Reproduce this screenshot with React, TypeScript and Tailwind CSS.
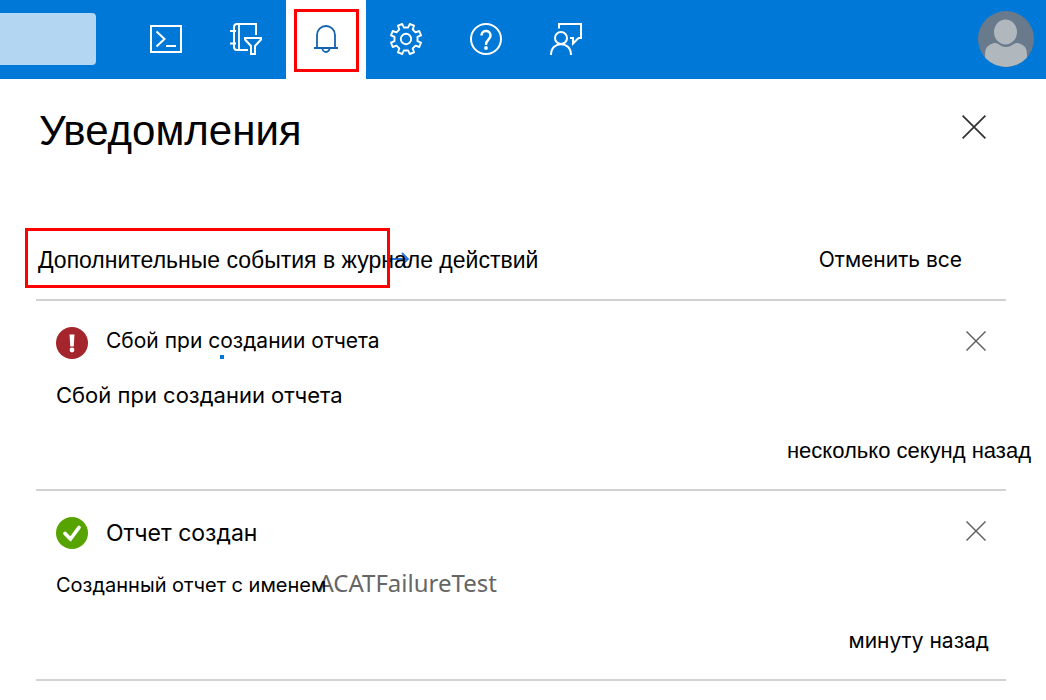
import type { ReactNode } from "react";

function HeaderButton({ label, children }: { label: string; children: ReactNode }) {
  return (
    <button type="button" aria-label={label} className="flex h-full w-20 items-center justify-center text-white">
      {children}
    </button>
  );
}

function CloseIcon({ className }: { className: string }) {
  return (
    <svg viewBox="0 0 24 24" className={className} fill="none" stroke="currentColor" strokeWidth="1.7" aria-hidden="true">
      <path d="M.6.6 23.4 23.4M23.4.6.6 23.4" />
    </svg>
  );
}

function Header() {
  return (
    <header className="flex h-[79px] items-center bg-[#0078d7]">
      <div className="mr-[30px] pb-px">
        <input
          type="search"
          aria-label="Поиск"
          className="block h-[52px] w-24 rounded-r-sm bg-[#b3d7f3] outline-none"
        />
      </div>
      <nav aria-label="Панель инструментов" className="flex h-full [&>button]:pb-px">
        <HeaderButton label="Cloud Shell">
          <svg viewBox="0 0 32 28" className="h-7 w-8" fill="none" stroke="currentColor" strokeWidth="2">
            <path d="M1 1h30v26H1zM6.500 6.500l8 7.500-8 7.500M16 21h10" />
          </svg>
        </HeaderButton>
        <HeaderButton label="Каталоги и подписки">
          <svg viewBox="0 0 32 32" className="size-8" fill="none" stroke="currentColor" strokeWidth="2">
            <path d="M26 12V1H7Q4 1 4 4v20q0 3 3 3h11" />
            <path d="M9 1v26M0 8h6M0 20.500h6" strokeWidth="1.800" />
            <path d="M15 15h16v1.500l-6 6.500v8h-4v-8l-6-6.500z" />
          </svg>
        </HeaderButton>
        <button type="button" aria-label="Уведомления" className="flex h-full w-20 items-center justify-center bg-white pt-[3px] text-[#1264b0]">
          <span className="flex h-[63px] w-[65px] items-center justify-center border-3 border-[#ff0000]">
            <svg viewBox="0 0 24 28" className="mb-1 h-7 w-6" fill="none" stroke="currentColor" strokeWidth="1.800">
              <path d="M3 22.500V10a9 9 0 0 1 18 0v12.500M0 23h24M8.500 23.500a3.500 3.500 0 0 0 7 0" />
            </svg>
          </span>
        </button>
        <HeaderButton label="Параметры">
          <svg viewBox="0 0 32 32" className="size-8" fill="none" stroke="currentColor" strokeWidth="1.900" strokeLinejoin="round">
            <circle cx="16" cy="16" r="5.200" />
            <path d="M13.800 4.500 12.300 1 8 2.700 9.300 6.500 6.500 9.300 2.700 8 1 12.300 4.500 13.800V18.200L1 19.700 2.700 24 6.500 22.700 9.300 25.500 8 29.300 12.300 31 13.800 27.500H18.200L19.700 31 24 29.300 22.700 25.500 25.500 22.700 29.300 24 31 19.700 27.500 18.200V13.800L31 12.300 29.300 8 25.500 9.300 22.700 6.500 24 2.700 19.700 1 18.200 4.500Z" />
          </svg>
        </HeaderButton>
        <HeaderButton label="Справка">
          <svg viewBox="0 0 32 32" className="size-8" fill="none" stroke="currentColor" strokeWidth="2">
            <circle cx="16" cy="16" r="15" />
            <path d="M11.500 12.500C11.500 6.500 20.500 6.500 20.500 12.500 20.500 16.500 16 16.500 16 22" strokeWidth="2.500" />
            <circle cx="16" cy="25" r="1.900" fill="currentColor" stroke="none" />
          </svg>
        </HeaderButton>
        <HeaderButton label="Отзывы">
          <svg viewBox="0 0 32 32" className="size-8" fill="none" stroke="currentColor" strokeWidth="2">
            <circle cx="11" cy="15" r="6" />
            <path d="M1 32c0-14.500 20-14.500 20 0M9 5.500V1h22v14h-2.500L23 20.500V15h-3" />
          </svg>
        </HeaderButton>
      </nav>
      <div className="mr-3 ml-auto pb-px">
        <button type="button" aria-label="Учетная запись" className="block size-14 overflow-hidden rounded-full bg-[#697a8c]">
          <svg viewBox="0 0 56 56" className="size-full" aria-hidden="true">
            <path d="M7 56V43q0-9 9-11 3-.5 5 1.500 7 5 14 0 2-2 5-1.500 9 2 9 11v13Z" fill="#b1b8bd" />
            <ellipse cx="27.500" cy="21" rx="11.500" ry="12.500" fill="#b1b8bd" />
          </svg>
        </button>
      </div>
    </header>
  );
}

function ErrorIcon() {
  return (
    <svg viewBox="0 0 32 32" className="size-8 shrink-0" role="img" aria-label="Ошибка">
      <circle cx="16" cy="16" r="16" fill="#a4262c" />
      <path d="M13.500 7.500h5l-.8 12h-3.400z" fill="#fff" />
      <circle cx="16" cy="23" r="2.400" fill="#fff" />
    </svg>
  );
}

function SuccessIcon() {
  return (
    <svg viewBox="0 0 32 32" className="size-8 shrink-0" role="img" aria-label="Успешно">
      <circle cx="16" cy="16" r="16" fill="#57a300" />
      <path d="m9 16.500 5.500 5.500L23 10.500" fill="none" stroke="#fff" strokeWidth="3.700" strokeLinecap="round" />
    </svg>
  );
}

interface NotificationProps {
  icon: ReactNode;
  title: ReactNode;
  titleClass: string;
  time: string;
  timeClass: string;
  children: ReactNode;
}

function Notification({ icon, title, titleClass, time, timeClass, children }: NotificationProps) {
  return (
    <li className="border-b-2 border-[#d2d2d2] pt-[26px] pb-[25px] pl-5">
      <div className="flex items-start">
        {icon}
        <h2 className={`ml-[18px] ${titleClass}`}>{title}</h2>
        <button type="button" aria-label="Закрыть уведомление" className="mt-1 mr-5 ml-auto text-[#605e5c]">
          <CloseIcon className="size-5" />
        </button>
      </div>
      <p className="mt-[22px] flex h-7 items-baseline leading-7 whitespace-nowrap">{children}</p>
      <p className={`mt-7 -mb-px text-right leading-7 ${timeClass}`}>{time}</p>
    </li>
  );
}

export default function App() {
  return (
    <div className="bg-white font-['Inter','Liberation_Sans',sans-serif] text-black">
      <Header />
      <main className="pt-7 pr-10 pl-9">
        <div className="flex items-start justify-between pr-5 pl-[3px]">
          <h1 className="font-['Liberation_Sans',sans-serif] text-[42px] leading-12">Уведомления</h1>
          <button type="button" aria-label="Закрыть" className="mt-2 text-[#323130]">
            <CloseIcon className="size-6" />
          </button>
        </div>
        <div className="mt-[73px] flex items-start justify-between border-b-2 border-[#d2d2d2] pb-[11px]">
          <a href="#activity" className="relative pt-4 pb-3 pl-0.5 font-['Liberation_Sans',sans-serif] text-[23px] leading-8 whitespace-nowrap">
            <svg viewBox="0 0 22 14" className="absolute top-6 left-[352px] h-3.5 w-[22px] text-[#2b74d8]" fill="none" stroke="currentColor" strokeWidth="1.800" aria-hidden="true">
              <path d="M0 7h20M14 1l6 6-6 6" />
            </svg>
            <span className="relative">Дополнительные события в журнале действий</span>
            <span className="absolute top-0 -left-[11px] h-15 w-[365px] border-3 border-[#ff0000]" />
          </a>
          <button type="button" className="mt-4 mr-11 text-[21px] leading-8">
            Отменить все
          </button>
        </div>
        <ul>
          <Notification
            icon={<ErrorIcon />}
            titleClass="text-[21px] leading-7"
            title={
              <span className="relative">
                Сбой при создании отчета
                <span className="absolute top-[27px] left-[114px] size-1 bg-[#0078d4]" />
              </span>
            }
            time="несколько секунд назад"
            timeClass="-mr-[25px] font-['Liberation_Sans',sans-serif] text-[22px]"
          >
            <span className="text-[22px] leading-7">Сбой при создании отчета</span>
          </Notification>
          <Notification
            icon={<SuccessIcon />}
            titleClass="text-[23px] leading-8"
            title="Отчет создан"
            time="минуту назад"
            timeClass="mr-[17px] text-[21px]"
          >
            <span className="relative z-10 text-[20px] leading-6">Созданный отчет с именем</span>
            <span className="-ml-2 font-['Noto_Sans',sans-serif] text-2xl leading-6 text-[#666]">ACATFailureTest</span>
          </Notification>
        </ul>
      </main>
    </div>
  );
}
